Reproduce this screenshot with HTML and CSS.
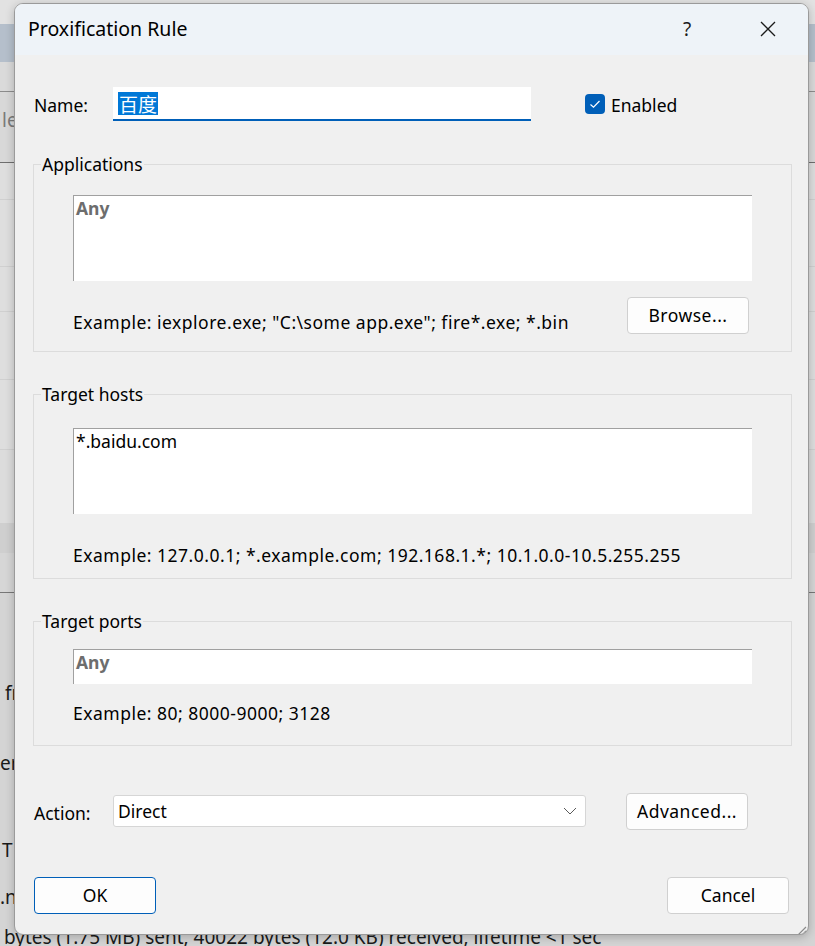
FILE: index.html
```html
<!DOCTYPE html>
<html>
<head>
<meta charset="utf-8">
<link rel="stylesheet" href="styles.css">
</head>
<body>
<div class="backdrop">
  <div class="bk r0"></div>
  <div class="bk r1"></div>
  <div class="bk r2"></div>
  <div class="bk r3"><span class="bktext">le</span></div>
  <div class="bk r4"></div>
  <div class="bk r5"></div>
  <div class="bk r6"></div>
  <div class="bk r7"></div>
  <div class="bk r8"></div>
  <div class="bk r9"></div>
  <div class="bk r10"></div>
  <div class="bk r11"></div>
  <div class="bk gap g1"></div>
  <div class="bk tline"><span class="bktext i5">fr</span></div>
  <div class="bk gap g2"></div>
  <div class="bk tline"><span class="bktext i0">er</span></div>
  <div class="bk gap g3"></div>
  <div class="bk tline"><span class="bktext">T</span></div>
  <div class="bk gap g4"></div>
  <div class="bk tline"><span class="bktext i0">.n</span></div>
  <div class="bk gap g5"></div>
  <div class="bk tline"><span class="bktext i4">bytes (1.75 MB) sent, 40022 bytes (12.0 KB) received, lifetime &lt;1 sec</span></div>
</div>

<div class="dialog">
  <div class="titlebar">
    <span class="title">Proxification Rule</span>
    <span class="help">?</span>
    <span class="close"><svg width="16" height="16" viewBox="0 0 16 16"><path d="M1 1L15 15M15 1L1 15" stroke="#1a1a1a" stroke-width="1.3" fill="none"/></svg></span>
  </div>
  <div class="content">
    <div class="name-row">
      <span class="label">Name:</span>
      <div class="name-input"><span class="sel">百度</span></div>
      <span class="checkbox"><svg width="20" height="20" viewBox="0 0 20 20"><rect x="0" y="0" width="20" height="20" rx="4" fill="#005fb8"/><path d="M5.5 10.5L8.5 13.2L14.5 7" stroke="#fff" stroke-width="1.2" fill="none"/></svg></span>
      <span class="check-label">Enabled</span>
    </div>

    <div class="group g-apps">
      <span class="legend">Applications</span>
      <div class="field tall t-apps"><span class="any">Any</span></div>
      <div class="example-row">
        <span class="example ex-apps">Example: iexplore.exe; "C:\some app.exe"; fire*.exe; *.bin</span>
        <span class="btn browse">Browse...</span>
      </div>
    </div>

    <div class="group g-hosts">
      <span class="legend">Target hosts</span>
      <div class="field tall t-hosts"><span class="val">*.baidu.com</span></div>
      <div class="example plain">Example: 127.0.0.1; *.example.com; 192.168.1.*; 10.1.0.0-10.5.255.255</div>
    </div>

    <div class="group g-ports">
      <span class="legend">Target ports</span>
      <div class="field short"><span class="any">Any</span></div>
      <div class="example plain2">Example: 80; 8000-9000; 3128</div>
    </div>

    <div class="action-row">
      <span class="label">Action:</span>
      <div class="combo"><span>Direct</span><svg width="14" height="8" viewBox="0 0 14 8"><path d="M1 1L7 7L13 1" stroke="#5a5a5a" stroke-width="1" fill="none"/></svg></div>
      <span class="btn advanced">Advanced...</span>
    </div>

    <div class="bottom-row">
      <span class="btn ok">OK</span>
      <span class="btn cancel">Cancel</span>
    </div>
  </div>
  <div class="grip"><svg width="14" height="14" viewBox="0 0 14 14"><path d="M13 3L3 13M13 7L7 13M13 11L11 13" stroke="#8a8a8a" stroke-width="1.2"/></svg></div>
</div>
</body>
</html>
```

FILE: styles.css
```css
html, body {
  margin: 0;
  padding: 0;
}
body {
  width: 815px;
  height: 946px;
  overflow: hidden;
  position: relative;
  font-family: "Noto Sans", "Noto Sans CJK SC", sans-serif;
  font-size: 17.5px;
  color: #000;
  background: #d9d9d9;
}

/* backdrop window */
.backdrop {
  display: flex;
  flex-direction: column;
  width: 815px;
  height: 946px;
}
.bk { flex: none; box-sizing: border-box; overflow: hidden; white-space: nowrap; }
.r0 { height: 24px; background: #e2e2e2; }
.r1 { height: 38px; background: #b5bfcb; }
.r2 { height: 30px; background: #dadada; border-bottom: 1px solid #8c8c8c; }
.r3 { height: 71px; background: #d8d8d8; border-bottom: 1px solid #6e6e6e; }
.r4 { height: 37px; background: #dedede; border-bottom: 1px solid #d0d0d0; }
.r5 { height: 67px; background: #dedede; border-bottom: 1px solid #d0d0d0; }
.r6 { height: 45px; background: #dedede; border-bottom: 1px solid #d0d0d0; }
.r7 { height: 68px; background: #dedede; border-bottom: 1px solid #d0d0d0; }
.r8 { height: 70px; background: #dedede; border-bottom: 1px solid #d0d0d0; }
.r9 { height: 73px; background: #dcdcdc; }
.r10 { height: 30px; background: #cfcfcf; }
.r11 { height: 40px; background: #d6d6d6; border-bottom: 1px solid #777; }
.gap { background: #d4d4d4; }
.g1 { height: 88px; }
.g2 { height: 46px; }
.g3 { height: 63px; }
.g4 { height: 23px; }
.g5 { height: 16px; }
.tline { height: 24px; background: #d4d4d4; }
.bktext { display: block; padding-left: 2px; font-size: 19px; color: #1a1a1a; line-height: 24px; }
.bktext.i0 { padding-left: 0; }
.bktext.i4 { padding-left: 4px; }
.bktext.i5 { padding-left: 5px; }
.r3 .bktext { color: #7a7a7a; padding-top: 16px; }

/* dialog */
.dialog {
  position: absolute;
  left: 14px;
  top: 3px;
  width: 795px;
  height: 932px;
  box-sizing: border-box;
  background: #f0f0f0;
  border: 1px solid #9a9a9a;
  border-radius: 9px;
  box-shadow: 0 2px 10px rgba(0,0,0,0.22);
  display: flex;
  flex-direction: column;
  overflow: hidden;
}
.titlebar {
  height: 51px;
  flex: none;
  background: #eef3f8;
  display: flex;
  align-items: center;
  padding-left: 13px;
}
.title { font-size: 19.5px; flex: 1; padding-bottom: 2px; }
.help { font-size: 19px; width: 20px; text-align: center; margin-right: 63px; color: #1a1a1a; padding-bottom: 2px; }
.close { width: 16px; height: 16px; margin-right: 32px; display: flex; margin-top: -1px; }

.content {
  flex: 1;
  display: flex;
  flex-direction: column;
  padding: 0 16px 0 18px;
}

.name-row {
  display: flex;
  align-items: center;
  margin-top: 32px;
  height: 34px;
}
.label { width: 80px; padding-left: 1px; box-sizing: border-box; padding-top: 2px; }
.name-input {
  width: 418px;
  height: 34px;
  box-sizing: border-box;
  background: #fff;
  border-bottom: 2px solid #005fb8;
  display: flex;
  align-items: center;
  padding-left: 5px;
}
.sel {
  background: #0078d7;
  color: #fff;
  font-family: "Noto Sans CJK SC", sans-serif;
  font-size: 19px;
  line-height: 23px;
  padding: 0 1px;
}
.checkbox { margin-left: 54px; display: flex; width: 20px; height: 20px; }
.check-label { margin-left: 6px; padding-top: 2px; }

.group {
  border: 1px solid #dcdcdc;
  display: flex;
  flex-direction: column;
  padding: 0 39px 0 39px;
  box-sizing: border-box;
}
.legend {
  align-self: flex-start;
  margin: -13px 0 0 -32px;
  padding: 0 1px;
  background: #f0f0f0;
  line-height: 24px;
}
.g-apps { margin-top: 43px; height: 188px; }
.g-hosts { margin-top: 42px; height: 185px; }
.g-ports { margin-top: 42px; height: 125px; }

.field {
  background: #fff;
  border-top: 1px solid #a0a0a0;
  border-left: 1px solid #a0a0a0;
  box-sizing: border-box;
  padding: 0 2px;
  line-height: 24px;
}
.tall { height: 86px; }
.t-apps { margin-top: 19px; }
.t-hosts { margin-top: 22px; }
.short { height: 35px; margin-top: 16px; }
.any { font-weight: bold; color: #6d6d6d; }
.val { color: #000; }

.example-row {
  display: flex;
  align-items: flex-start;
  justify-content: space-between;
  margin-top: 16px;
}
.example { line-height: 24px; letter-spacing: 0.5px; }
.ex-apps { padding-top: 13px; }
.plain { margin-top: 29px; }
.plain2 { margin-top: 17px; }

.btn {
  background: #fdfdfd;
  border: 1px solid #d0d0d0;
  border-radius: 4px;
  box-sizing: border-box;
  display: flex;
  align-items: center;
  justify-content: center;
  width: 122px;
  height: 37px;
  padding-bottom: 1px;
  flex: none;
}
.browse, .advanced { letter-spacing: 0.5px; }
.browse { margin-right: 3px; }

.action-row {
  display: flex;
  align-items: center;
  margin-top: 47px;
  height: 37px;
}
.combo {
  width: 473px;
  height: 32px;
  box-sizing: border-box;
  background: #fff;
  border: 1px solid #d6d6d6;
  border-radius: 3px;
  display: flex;
  align-items: center;
  justify-content: space-between;
  padding: 0 8px 0 4px;
  margin-top: -2px;
}
.advanced { margin-left: 40px; }

.bottom-row {
  display: flex;
  justify-content: space-between;
  margin-top: 47px;
  padding-left: 1px;
}
.ok { border-color: #005fb8; }
.cancel { margin-right: 3px; }

.grip {
  position: absolute;
  right: 1px;
  bottom: 1px;
  width: 14px;
  height: 14px;
}
```
